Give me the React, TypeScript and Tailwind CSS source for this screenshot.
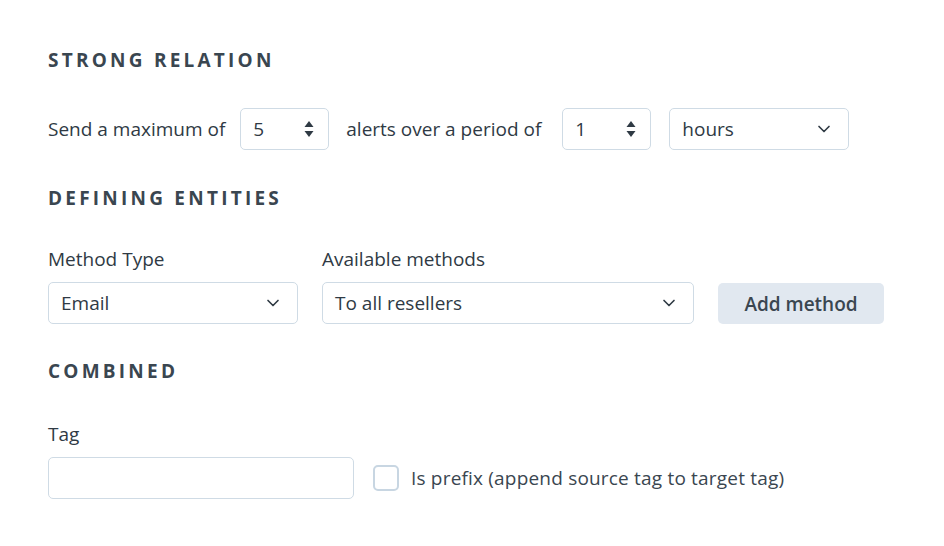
import { ChevronDown } from "lucide-react";

function Spinner({ value }: { value: string }) {
  return (
    <div className="flex h-[42px] w-[89px] items-center justify-between rounded-[5px] border border-[#cfdbe5] bg-white pl-3 pr-[14px]">
      <span>{value}</span>
      <svg width="10" height="18" viewBox="0 0 10 18" fill="#2f3a44">
        <path d="M5 1 L9.5 7 L0.5 7 Z" />
        <path d="M5 17 L9.5 11 L0.5 11 Z" />
      </svg>
    </div>
  );
}

function Select({ value, width }: { value: string; width: string }) {
  return (
    <div
      className={`flex h-[42px] items-center justify-between rounded-[5px] border border-[#cfdbe5] bg-white pl-3 pr-[14px] ${width}`}
    >
      <span>{value}</span>
      <ChevronDown className="h-5 w-5 text-[#2f3a44]" strokeWidth={2} />
    </div>
  );
}

function Heading({ children }: { children: string }) {
  return (
    <h2 className="font-['Open_Sans',sans-serif] text-[19px] font-bold uppercase leading-[28px] tracking-[0.17em] text-[#3a4650]">
      {children}
    </h2>
  );
}

export default function App() {
  return (
    <div className="min-h-[546px] bg-white px-12 pt-[46px] font-['Open_Sans',sans-serif] text-[19px] leading-[26px] text-[#2f3a44]">
      <Heading>Strong Relation</Heading>

      <div className="mt-[34px] flex items-center">
        <span className="mr-[15px]">Send a maximum of</span>
        <Spinner value="5" />
        <span className="ml-[17px] mr-[21px]">alerts over a period of</span>
        <Spinner value="1" />
        <div className="ml-[18px]">
          <Select value="hours" width="w-[180px]" />
        </div>
      </div>

      <div className="mt-[34px]">
        <Heading>Defining Entities</Heading>
      </div>

      <div className="mt-[34px] flex items-end gap-6">
        <div className="flex flex-col gap-[10px]">
          <label>Method Type</label>
          <Select value="Email" width="w-[250px]" />
        </div>
        <div className="flex flex-col gap-[10px]">
          <label>Available methods</label>
          <Select value="To all resellers" width="w-[372px]" />
        </div>
        <button className="h-[41px] w-[166px] rounded-[5px] bg-[#e1e8f0] text-[19px] font-semibold text-[#3a4650]">
          Add method
        </button>
      </div>

      <div className="mt-[33px]">
        <Heading>Combined</Heading>
      </div>

      <div className="mt-[36px] flex flex-col gap-[10px]">
        <label>Tag</label>
        <div className="flex items-center">
          <input className="h-[42px] w-[306px] rounded-[5px] border border-[#cfdbe5] bg-white px-3 outline-none" />
          <label className="ml-[19px] flex items-center gap-3">
            <span className="h-[26px] w-[26px] rounded-[5px] border-2 border-[#c8d6e2] bg-white" />
            <span className="tracking-[0.01em] text-[#3a4650]">Is prefix (append source tag to target tag)</span>
          </label>
        </div>
      </div>
    </div>
  );
}
